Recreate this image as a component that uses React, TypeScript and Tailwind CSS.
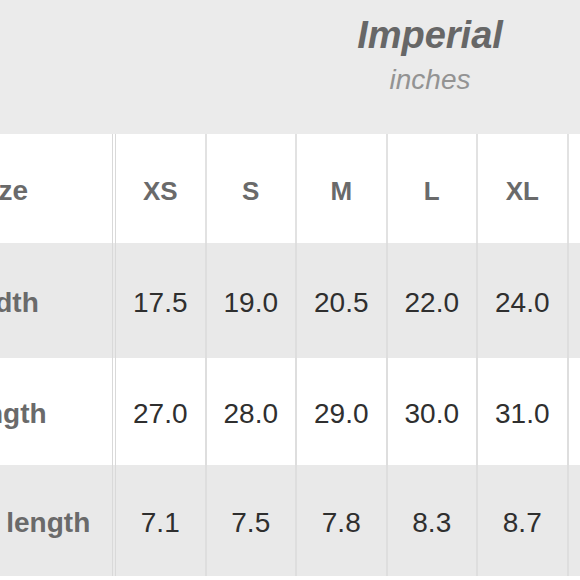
const sizes = ["XS", "S", "M", "L", "XL", "XXL"];

const rows = [
  { label: "Width", values: ["17.5", "19.0", "20.5", "22.0", "24.0", "26.0"], bg: "bg-[#e9e9e9]", h: "h-[115px]" },
  { label: "Length", values: ["27.0", "28.0", "29.0", "30.0", "31.0", "32.0"], bg: "bg-white", h: "h-[107px]" },
  { label: "Sleeve length", values: ["7.1", "7.5", "7.8", "8.3", "8.7", "9.1"], bg: "bg-[#e9e9e9]", h: "h-[111px]" },
];

const gridCols = "grid grid-cols-[116px_repeat(6,90.5px)]";

function LabelCell({ text }: { text: string }) {
  return (
    <div className="flex items-center overflow-hidden border-r-[4px] border-double border-[#d9d9d9] pt-[5px]">
      <div className="-ml-[114px] w-[228px] shrink-0 whitespace-nowrap text-center text-[28px] font-bold leading-none text-[#6a6a6a]">
        {text}
      </div>
    </div>
  );
}

export default function App() {
  return (
    <div
      className="h-[580px] w-[580px] overflow-hidden bg-white"
      style={{ fontFamily: '"Liberation Sans", Arial, sans-serif' }}
    >
      <div className="flex h-[134px] flex-col items-center bg-[#ebebeb] pl-[280px] pt-[16px]">
        <div className="w-[300px] text-center text-[38px] font-bold italic leading-none text-[#676767]">
          Imperial
        </div>
        <div className="mt-[12px] w-[300px] text-center text-[28px] italic leading-none text-[#939393]">
          inches
        </div>
      </div>

      <div className={`${gridCols} h-[109px] bg-white`}>
        <LabelCell text="Size" />
        {sizes.map((s) => (
          <div
            key={s}
            className="flex items-center justify-center border-r-2 border-[#e2e2e2] pt-[5px] text-[26px] font-bold leading-none text-[#6a6a6a]"
          >
            {s}
          </div>
        ))}
      </div>

      {rows.map((row) => (
        <div key={row.label} className={`${gridCols} ${row.h} ${row.bg}`}>
          <LabelCell text={row.label} />
          {row.values.map((v, i) => (
            <div
              key={i}
              className="flex items-center justify-center border-r-2 border-[#dedede] pt-[5px] text-[28px] leading-none text-[#2f2f2f]"
            >
              {v}
            </div>
          ))}
        </div>
      ))}
    </div>
  );
}
